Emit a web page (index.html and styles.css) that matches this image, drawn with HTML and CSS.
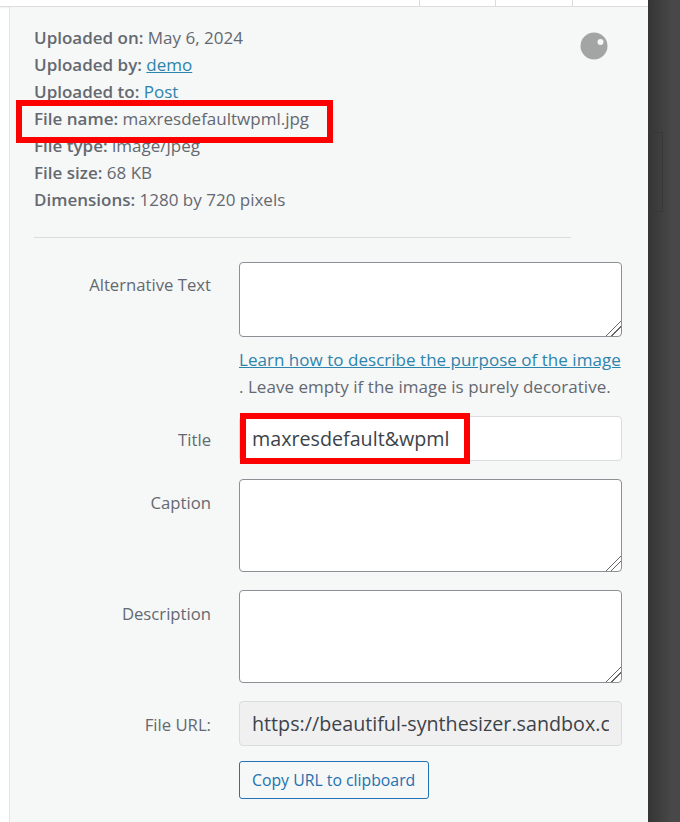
FILE: index.html
```html
<!DOCTYPE html>
<html lang="en">
<head>
    <meta charset="UTF-8">
    <meta name="viewport" content="width=device-width, initial-scale=1.0">
    <title>Attachment Details</title>
    <link rel="stylesheet" href="styles.css">
</head>
<body>

<div class="screen">
    <main class="modal">
        <!-- Thumbnail strip cut off at the top -->
        <div class="strip">
            <span class="strip-cell"></span>
            <span class="strip-cell"></span>
            <span class="strip-cell"></span>
        </div>

        <div class="columns">
            <div class="gutter"></div>

            <section class="details">
                <div class="info">
                    <div><b>Uploaded on:</b> May 6, 2024</div>
                    <div><b>Uploaded by:</b> <a href="#">demo</a></div>
                    <div><b>Uploaded to:</b> <a class="plain" href="#">Post</a></div>
                    <div><b>File name:</b> maxresdefaultwpml.jpg</div>
                    <div><b>File type:</b> image/jpeg</div>
                    <div><b>File size:</b> 68 KB</div>
                    <div><b>Dimensions:</b> 1280 by 720 pixels</div>
                </div>

                <svg class="orb" width="28" height="28" viewBox="0 0 28 28" aria-hidden="true">
                    <circle cx="14" cy="14" r="13.5" fill="#a3a5a4"/>
                    <circle cx="20.5" cy="10" r="3" fill="#f6f7f7"/>
                </svg>

                <hr class="rule">

                <form class="fields">
                    <label class="field-label label-alt" for="alt">Alternative Text</label>
                    <div class="field-alt">
                        <textarea id="alt" class="box box-alt"></textarea>
                        <p class="help"><a href="#">Learn how to describe the purpose of the image</a><br>. Leave empty if the image is purely decorative.</p>
                    </div>

                    <label class="field-label" for="title">Title</label>
                    <input id="title" class="line line-title" type="text" value="maxresdefault&amp;wpml">

                    <label class="field-label" for="caption">Caption</label>
                    <textarea id="caption" class="box"></textarea>

                    <label class="field-label" for="description">Description</label>
                    <textarea id="description" class="box"></textarea>

                    <label class="field-label" for="url">File URL:</label>
                    <div>
                        <input id="url" class="line line-url" type="text" readonly value="https://beautiful-synthesizer.sandbox.com/wp-content/uploads/2024/05/maxresdefaultwpml.jpg">
                        <button class="copy" type="button">Copy URL to clipboard</button>
                    </div>
                </form>
            </section>
        </div>

        <!-- Red annotation boxes from the tutorial screenshot -->
        <div class="mark mark-name"></div>
        <div class="mark mark-title"></div>
    </main>

    <aside class="backdrop">
        <div class="backdrop-box"></div>
    </aside>
</div>

</body>
</html>
```

FILE: styles.css
```css
html, body {
    margin: 0;
    height: 100%;
}

body {
    font-family: "Open Sans", "Noto Sans", sans-serif;
    font-size: 17px;
    color: #646970;
    overflow: hidden;
}

.screen {
    display: flex;
    width: 680px;
    height: 822px;
    overflow: hidden;
}

.modal {
    position: relative;
    width: 648px;
    flex: none;
    background-color: #fff;
}

.strip {
    display: flex;
    height: 6px;
    padding-left: 419px;
    border-bottom: 1px solid #dcdcde;
    box-shadow: 0 1px 2px rgba(0, 0, 0, 0.06);
}

.strip-cell {
    width: 76px;
    border-left: 1px solid #dcdcde;
}

.columns {
    display: flex;
    height: 815px;
}

.gutter {
    width: 9px;
    flex: none;
    border-right: 1px solid #e2e4e5;
}

.details {
    position: relative;
    flex: 1;
    padding: 17px 26px 0 24px;
    background-color: #f6f7f7;
}

.info {
    line-height: 27px;
}

.info b {
    font-weight: 600;
}

a {
    color: #2d84ad;
}

a.plain {
    text-decoration: none;
}

.orb {
    position: absolute;
    top: 25px;
    right: 40px;
}

.rule {
    width: 537px;
    margin: 24px 0;
    border: 0;
    border-top: 1px solid #dcdcde;
}

.fields {
    display: grid;
    grid-template-columns: 177px 383px;
    column-gap: 28px;
    row-gap: 18px;
}

.field-label {
    text-align: right;
    font-size: 16.7px;
    line-height: 22px;
    padding-top: 13px;
}

.label-alt {
    padding-top: 12px;
}

.box {
    display: block;
    box-sizing: border-box;
    width: 100%;
    height: 93px;
    margin: 0;
    background-color: #fff;
    border: 1px solid #8c8f94;
    border-radius: 4px;
}

.box::-webkit-resizer {
    background:
        linear-gradient(135deg, transparent 48%, #666 48%, #666 53%, transparent 53%, transparent 65%, #666 65%, #666 70%, transparent 70%);
}

.box-alt {
    height: 75px;
}

.help {
    margin: 9px 0 -2px;
    line-height: 27px;
    white-space: nowrap;
    letter-spacing: 0.03px;
}

.line {
    display: block;
    box-sizing: border-box;
    width: 100%;
    height: 45px;
    margin: 0;
    padding: 0 12px;
    font-family: inherit;
    font-size: 19.7px;
    color: #3c434a;
    border: 1px solid #dcdcde;
    border-radius: 4px;
}

.line-title {
    background-color: #fff;
}

.line-url {
    background-color: #f0f0f1;
}

.copy {
    display: block;
    height: 38px;
    margin-top: 15px;
    padding: 0 13px 0 12px;
    font-family: inherit;
    font-size: 15.8px;
    color: #2271b1;
    background-color: #f6f7f7;
    border: 1px solid #2271b1;
    border-radius: 3px;
}

.mark {
    position: absolute;
    box-sizing: border-box;
    border: 6px solid #fe0000;
}

.mark-name {
    left: 16px;
    top: 100px;
    width: 317px;
    height: 43px;
}

.mark-title {
    left: 240px;
    top: 413px;
    width: 230px;
    height: 51px;
}

.backdrop {
    flex: 1;
    background: linear-gradient(to right, #353535, #484848 24px);
    padding-top: 132px;
}

.backdrop-box {
    box-sizing: border-box;
    width: 15px;
    height: 80px;
    border: 1px solid #383838;
    border-left: 0;
}
```
